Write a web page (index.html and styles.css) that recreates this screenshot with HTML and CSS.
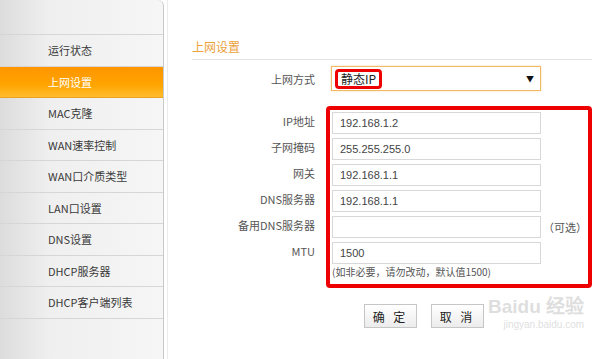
FILE: index.html
```html
<!DOCTYPE html>
<html lang="zh-CN">
<head>
    <meta charset="UTF-8">
    <title>上网设置</title>
    <link rel="stylesheet" href="styles.css">
</head>
<body>
    <div class="page">
        <div class="sidebar">
            <div class="sidebar-top"></div>
            <ul class="menu">
                <li>运行状态</li>
                <li class="active">上网设置</li>
                <li>MAC克隆</li>
                <li>WAN速率控制</li>
                <li>WAN口介质类型</li>
                <li>LAN口设置</li>
                <li>DNS设置</li>
                <li>DHCP服务器</li>
                <li>DHCP客户端列表</li>
            </ul>
        </div>

        <div class="main">
            <h2 class="title">上网设置</h2>

            <div class="row select-row">
                <label class="label">上网方式</label>
                <div class="select">
                    <span class="mark">静态IP</span>
                    <span class="arrow">▼</span>
                </div>
            </div>

            <div class="group">
                <div class="labels">
                    <label class="label">IP地址</label>
                    <label class="label">子网掩码</label>
                    <label class="label">网关</label>
                    <label class="label">DNS服务器</label>
                    <label class="label">备用DNS服务器</label>
                    <label class="label">MTU</label>
                </div>
                <div class="redbox">
                    <div class="field"><input class="input" value="192.168.1.2"></div>
                    <div class="field"><input class="input" value="255.255.255.0"></div>
                    <div class="field"><input class="input" value="192.168.1.1"></div>
                    <div class="field"><input class="input" value="192.168.1.1"></div>
                    <div class="field"><input class="input" value=""><span class="optional">（可选）</span></div>
                    <div class="field"><input class="input" value="1500"></div>
                    <p class="hint">(如非必要，请勿改动，默认值1500)</p>
                </div>
            </div>

            <div class="buttons">
                <button class="btn">确 定</button>
                <button class="btn">取 消</button>
            </div>

            <div class="watermark">
                <div class="wm-logo">Baidu 经验</div>
                <div class="wm-url">jingyan.baidu.com</div>
            </div>
        </div>
    </div>
</body>
</html>
```

FILE: styles.css
```css
* {
    margin: 0;
    padding: 0;
    box-sizing: border-box;
}

body {
    font-family: "Noto Sans CJK SC", "Liberation Sans", sans-serif;
    background: #fff;
    color: #333;
    width: 600px;
    height: 359px;
    overflow: hidden;
}

.page {
    display: flex;
    height: 359px;
}

/* sidebar */
.sidebar {
    width: 164px;
    flex-shrink: 0;
    background: linear-gradient(to right, #dcdcdc 0%, #efefef 30%, #f6f6f6 100%);
    border-right: 1px solid #c9c9c9;
    border-top-right-radius: 6px;
}

.sidebar-top {
    height: 34px;
}

.menu {
    list-style: none;
    border-top: 1px solid #d6d6d6;
}

.menu li {
    height: 31.5px;
    line-height: 30px;
    padding-left: 48px;
    font-size: 11px;
    color: #3a3a3a;
    border-bottom: 1px solid #d6d6d6;
}

.menu li.active {
    background: linear-gradient(to bottom, #ff9500 0%, #ffa500 60%, #ffbd2e 100%);
    color: #fff;
    border-bottom-color: #f0a020;
}

/* main */
.main {
    position: relative;
    flex: 1;
    margin-left: 3px;
    border-left: 1px solid #ececec;
    padding: 39px 10px 0 24px;
}

.title {
    font-size: 12px;
    font-weight: normal;
    color: #eba13c;
    line-height: 15px;
    padding-bottom: 5px;
    border-bottom: 1px solid #e4e4e4;
}

.row {
    display: flex;
    align-items: center;
}

.label {
    display: block;
    width: 123px;
    text-align: right;
    font-size: 11px;
    color: #555;
}

.select-row {
    margin-top: 6px;
}

.select-row .label {
    margin-right: 16px;
}

.select {
    width: 210px;
    height: 25px;
    border: 1px solid #f2b968;
    box-shadow: 0 0 2px #f8d8a8;
    display: flex;
    align-items: center;
    justify-content: space-between;
    padding: 0 6px 0 3px;
}

.mark {
    font-size: 12px;
    color: #222;
    border: 3px solid #e00;
    border-radius: 4px;
    padding: 0 3px;
    line-height: 14px;
}

.arrow {
    font-size: 8px;
    color: #111;
}

.group {
    display: flex;
    margin-top: 15px;
}

.labels {
    padding-top: 4px;
}

.labels .label {
    height: 26px;
    line-height: 22px;
}

.redbox {
    margin-left: 11px;
    width: 266px;
    border: 4px solid #ee0000;
    border-radius: 4px;
    padding: 0 0 4px 2px;
}

.field {
    display: flex;
    align-items: center;
    height: 26px;
}

.input {
    width: 209px;
    height: 22px;
    border: 1px solid #d8d8d8;
    padding: 0 7px;
    font-family: "Liberation Sans", sans-serif;
    font-size: 11px;
    color: #444;
    outline: none;
}

.optional {
    margin-left: 2px;
    font-size: 11px;
    color: #555;
}

.hint {
    font-size: 10px;
    color: #555;
    line-height: 16px;
    margin-top: -2px;
}

.buttons {
    display: flex;
    gap: 14px;
    margin: 16px 0 0 172px;
}

.btn {
    width: 53px;
    height: 24px;
    border: 1px solid #c6c6c6;
    background: linear-gradient(to bottom, #ffffff 0%, #ececec 100%);
    font-family: "Noto Sans CJK SC", sans-serif;
    font-size: 12px;
    color: #222;
    letter-spacing: 3px;
}

/* baidu watermark */
.watermark {
    position: absolute;
    left: 320px;
    top: 296px;
    color: rgba(200, 200, 200, 0.6);
    font-family: "Liberation Sans", sans-serif;
    text-align: right;
}

.wm-logo {
    font-size: 19px;
    font-weight: bold;
    line-height: 22px;
}

.wm-url {
    font-size: 10px;
    line-height: 13px;
}
```
